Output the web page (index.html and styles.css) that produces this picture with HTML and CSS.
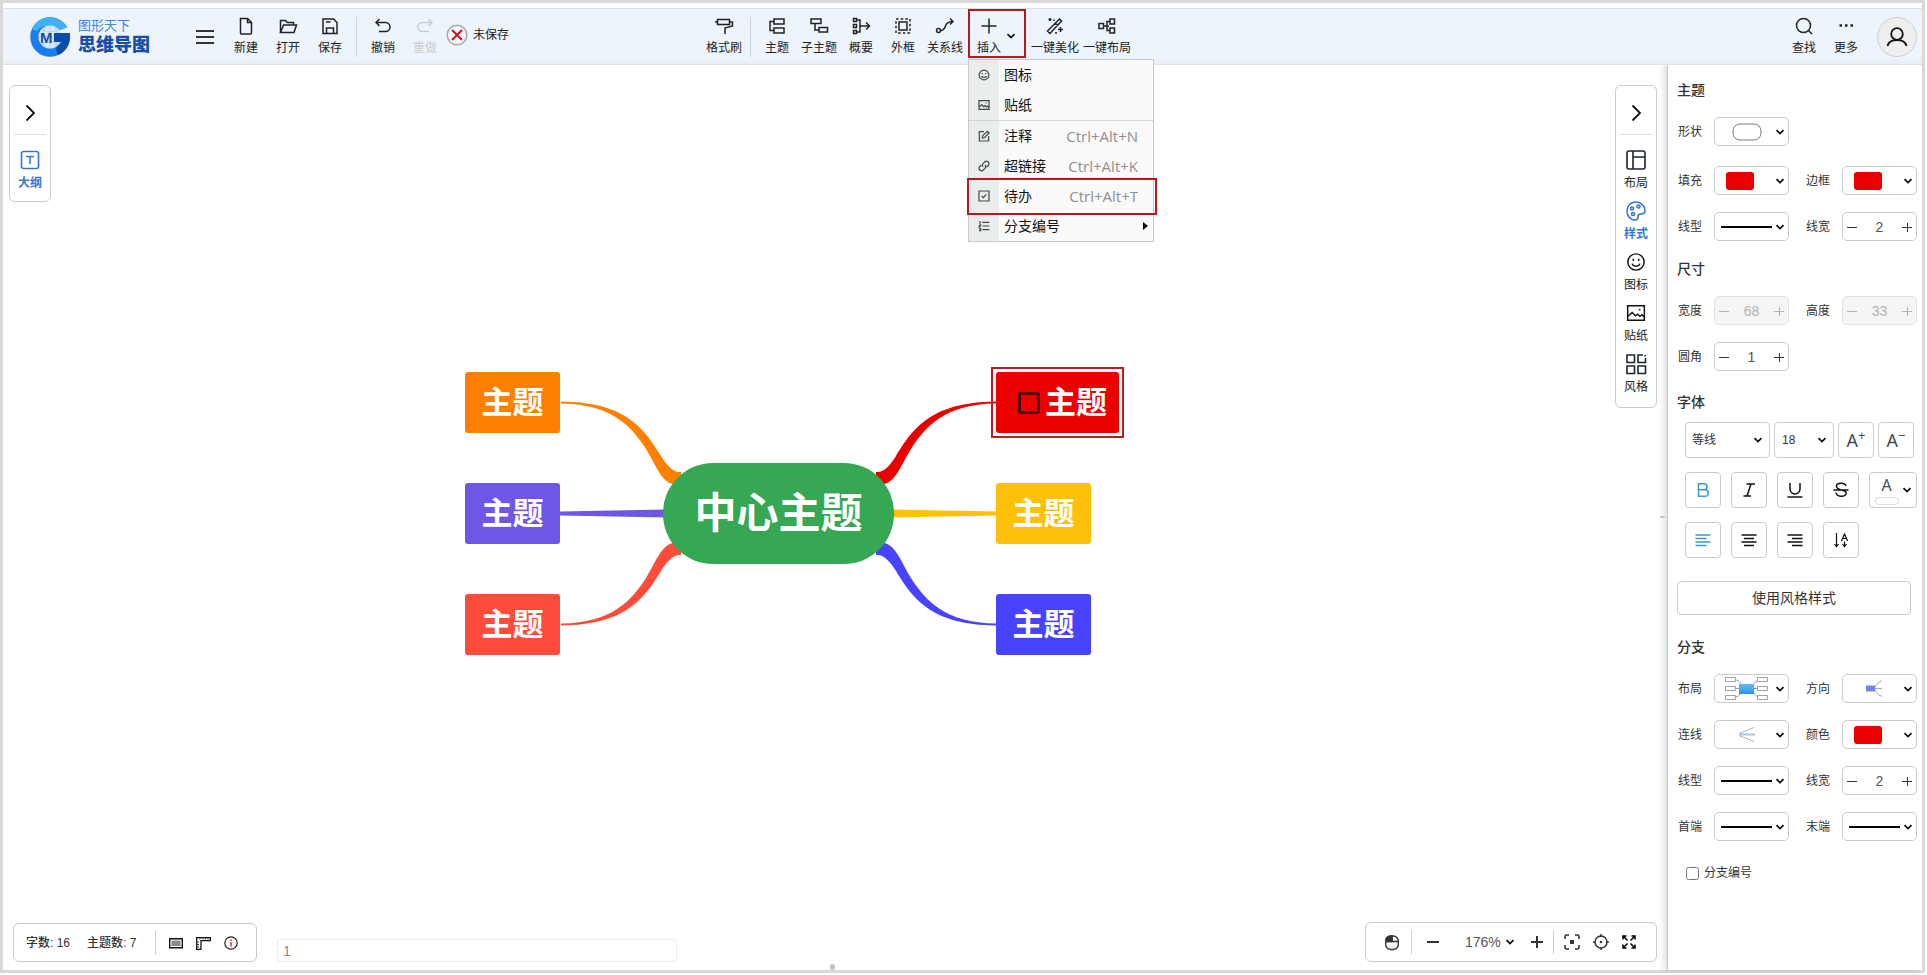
FILE: index.html
```html
<!DOCTYPE html>
<html lang="zh-CN">
<head>
<meta charset="utf-8">
<title>思维导图</title>
<link rel="stylesheet" href="styles.css">
</head>
<body>
<svg class="defs" aria-hidden="true">
  <symbol id="caret" viewBox="0 0 10 10"><path d="M1.5 3.2 5 6.6l3.500-3.400" fill="none" stroke="#111" stroke-width="1.800"/></symbol>
  <symbol id="minus" viewBox="0 0 10 10"><path d="M0 5.500h10" fill="none" stroke="currentColor"/></symbol>
  <symbol id="plus" viewBox="0 0 10 10"><path d="M0 5.500h10M5.500 1v9" fill="none" stroke="currentColor"/></symbol>
  <symbol id="smile" viewBox="0 0 18 18"><circle cx="9" cy="9" r="7.300"/><path d="M5.500 10.500c.8 3 6.200 3 7 0"/><path d="M6.600 6v2M11.400 6v2"/></symbol>
  <symbol id="pic" viewBox="0 0 18 18"><path d="M1.500 2.500h15v13h-15z"/><path d="m2 12 3.500-3.500 3 3 2-1.500 2 2 2-1.500 2 2"/><path d="M11.500 6h1.500"/></symbol>
</svg>
<div class="frame">
  <header class="topbar">
    <div class="group group-left">
      <a class="brand" href="#" aria-label="图形天下 思维导图">
        <svg width="40" height="40" viewBox="0 0 40 40" aria-hidden="true">
          <circle cx="20" cy="20" r="15" fill="none" stroke="#1a7df0" stroke-width="9.500"/>
          <path d="M2 12C9-3 29-3 37 11l-9 3C23 8 12 7 7 14z" fill="#3fb2f4"/>
          <path d="M28 14 37 10.500 41 12v5H28z" fill="#edf4fb"/>
          <circle cx="20" cy="20" r="11.500" fill="#dbe9f8"/>
          <path d="M9 20h21M20 9v22M12 12c4 4 12 4 16 0M12 28c4-4 12-4 16 0M16 9c-5 7-5 15 0 22M24 9c5 7 5 15 0 22" fill="none" stroke="#b3cde9"/>
          <path d="M24 16h16v4c0 9-5 15-12 18-2-4-2-6-1-9 3-1 4-2 5-4h-8z" fill="#0b4bb0"/>
          <text class="logo-m" x="10" y="26">M</text>
        </svg>
        <span class="brand-text"><span class="brand-top">图形天下</span><span class="brand-main">思维导图</span></span>
      </a>
      <button class="menu" aria-label="菜单"><svg width="18" height="18" viewBox="0 0 18 18"><path d="M0 3h18M0 9h18M0 15h18" stroke="#333" stroke-width="2"/></svg></button>
      <button class="tool"><svg class="ic" viewBox="0 0 18 18"><path d="M3.500 1.500h7l4 4v10.500c0 .5-.5 1-1 1h-9c-.6 0-1-.5-1-1z"/><path d="M10.500 1.500v4h4"/></svg><span>新建</span></button>
      <button class="tool"><svg class="ic" viewBox="0 0 18 18"><path d="M1.500 15.500v-12h5l2 2h6v2.500"/><path d="M1.500 15.500 4.500 8h13l-2.500 7.500z"/></svg><span>打开</span></button>
      <button class="tool"><svg class="ic" viewBox="0 0 18 18"><path d="M2 2h10.500L16 5.500V16.500H2z"/><path d="M5.500 16.500V11h7v5.500M5 5h4.500"/></svg><span>保存</span></button>
      <span class="sep"></span>
      <button class="tool"><svg class="ic" viewBox="0 0 18 18"><path d="M5.500 2 2 5.500 5.500 9M2 5.500h9.500a4.500 4.500 0 0 1 0 9H5"/></svg><span>撤销</span></button>
      <button class="tool" disabled><svg class="ic" viewBox="0 0 18 18"><path d="M12.500 2 16 5.500 12.500 9M16 5.500H6.500a4.500 4.500 0 0 0 0 9H13"/></svg><span>重做</span></button>
      <span class="status"><svg width="22" height="22" viewBox="0 0 22 22"><circle cx="11" cy="11" r="9.800" fill="#f5f7f9" stroke="#a9a9a9" stroke-width="1.500"/><path d="m6 6 10 10M16 6 6 16" stroke="#c9181e" stroke-width="2"/></svg><span>未保存</span></span>
    </div>
    <div class="group">
      <button class="tool"><svg class="ic" viewBox="0 0 18 18"><path d="M2.500 2.500h12v5h-12zM0 5h2.500M14.500 5H17.500v4l-7.500 2v6"/></svg><span>格式刷</span></button>
      <span class="sep"></span>
      <button class="tool"><svg class="ic" viewBox="0 0 18 18"><path d="M6 2h10v5H6zM6 11h10v5H6zM6 4.500H2v9h4"/></svg><span>主题</span></button>
      <button class="tool"><svg class="ic" viewBox="0 0 18 18"><path d="M1 2h10v4.500H1zM9 10.500h8.500V15H9zM5 6.500v6.500h4"/></svg><span>子主题</span></button>
      <button class="tool"><svg class="ic" viewBox="0 0 18 18"><path d="M1.500 1.500h3v3h-3zM1.500 7.500h3v3h-3zM1.500 13.500h3v3h-3zM4.500 3H8v12H4.500M8 9h9.500M14 5.500 17.500 9 14 12.500"/></svg><span>概要</span></button>
      <button class="tool"><svg class="ic" viewBox="0 0 18 18"><path d="M5 5h8v8H5z"/><path d="M2 2h14v14H2z" stroke-dasharray="2.500 2.170"/></svg><span>外框</span></button>
      <button class="tool"><svg class="ic" viewBox="0 0 18 18"><circle cx="2.500" cy="13.500" r="2"/><path d="M4.500 13.500c7 0 2-9 12.500-9M14 1.500l3 3-3 3"/></svg><span>关系线</span></button>
      <div class="insert">
        <button class="tool" aria-haspopup="menu" aria-expanded="true"><svg class="ic" viewBox="0 0 18 18"><path d="M9 1.500v15M1.500 9h15"/></svg><span>插入</span></button>
        <svg class="caret insert-caret"><use href="#caret"/></svg>
        <ul class="dropdown" role="menu">
          <li><button role="menuitem"><svg class="mi"><use href="#smile"/></svg><span>图标</span></button></li>
          <li><button role="menuitem"><svg class="mi"><use href="#pic"/></svg><span>贴纸</span></button></li>
          <li class="divided"><button role="menuitem"><svg class="mi" viewBox="0 0 18 18"><path d="M9 2.500H2v14h14V9"/><path d="m7 8.500 7-6.500 2.500 2.500-7 7L6.500 12z"/></svg><span>注释</span><kbd>Ctrl+Alt+N</kbd></button></li>
          <li><button role="menuitem"><svg class="mi" viewBox="0 0 18 18"><path d="M7.500 10.500a3.800 3.800 0 0 1 0-5L10 3a3.700 3.700 0 0 1 5.300 5.300L13 10.500"/><path d="M10.500 7.500a3.800 3.800 0 0 1 0 5L8 15a3.700 3.700 0 0 1-5.300-5.300L5 7.500"/></svg><span>超链接</span><kbd>Ctrl+Alt+K</kbd></button></li>
          <li class="marked"><button role="menuitem"><svg class="mi" viewBox="0 0 18 18"><path d="M1.500 1.500h15v15h-15zM5.500 9l2.500 2.500 4.500-5"/></svg><span>待办</span><kbd>Ctrl+Alt+T</kbd></button></li>
          <li><button role="menuitem"><svg class="mi" viewBox="0 0 18 18"><path d="M6.500 3.500H17M6.500 9H17M6.500 14.500H17M3 1.500v4M1.500 7.500H4L1.500 10.500H4M1.500 13H4v3H1.500"/></svg><span>分支编号</span><svg class="more" viewBox="0 0 5 8"><path d="M0 0v8l5-4z"/></svg></button></li>
        </ul>
      </div>
      <button class="tool wide"><svg class="ic" viewBox="0 0 18 18"><path d="m1.500 14 9.500-9.500L13.500 2l2 2-11.500 12.500zM9.500 6l2.500 2.500M4 1v3M2.500 2.500h3M8 2.500v1.500M14.500 10v5M12 12.500h5M10 15v2"/></svg><span>一键美化</span></button>
      <button class="tool wide"><svg class="ic" viewBox="0 0 18 18"><path d="M1 6.500h4.500v5H1zM5.500 9H11M12 2h4.500v5H12zM12 11h4.500v5H12zM12 4.500H9v9h3"/></svg><span>一键布局</span></button>
    </div>
    <div class="group group-right">
      <button class="tool"><svg class="ic" viewBox="0 0 18 18"><circle cx="8.500" cy="8.500" r="7"/><path d="m13.500 13.500 3.500 3.500"/></svg><span>查找</span></button>
      <button class="tool"><svg class="ic" viewBox="0 0 18 18"><path d="M2.500 8.500h2.500M8 8.500h2.500M13.500 8.500H16" stroke-width="2.500"/></svg><span>更多</span></button>
      <button class="avatar" aria-label="用户"><svg width="22" height="22" viewBox="0 0 22 22"><circle cx="11" cy="8" r="5.800"/><path d="M1.500 20c2-8 17-8 19 0"/></svg></button>
    </div>
  </header>

  <div class="work">
    <main class="canvas">
      <aside class="rail">
        <button class="fold" aria-label="展开"><svg width="18" height="18" viewBox="0 0 18 18"><path d="m5.500 1.500 7.500 7.500-7.500 7.500"/></svg></button>
        <button class="rail-item active"><svg viewBox="0 0 20 20"><rect x="1.500" y="1.500" width="17" height="17" rx="2"/><path d="M6 6.500h8M10 6.500V14"/></svg><span>大纲</span></button>
      </aside>

      <div class="mindmap">
        <svg class="links" viewBox="465 367 660 290" width="660" height="290">
          <defs><path id="arm" d="M876 472h3C884 471 890 466 896 456 912 430 930 402 996 401.500v2C945 404 925 427 911 449 902 463 896 482 884 484h-8z"/></defs>
          <use href="#arm" fill="#eb0000"/>
          <use href="#arm" fill="#ff7f00" transform="translate(1557 0) scale(-1 1)"/>
          <use href="#arm" fill="#4743ff" transform="translate(0 1027) scale(1 -1)"/>
          <use href="#arm" fill="#ff4b3a" transform="translate(1557 1027) scale(-1 -1)"/>
          <path d="M890 509.500 997 511.500v4L890 517.500z" fill="#ffc00a"/>
          <path d="M667 509.500 560 511.500v4L667 517.500z" fill="#6f56e5"/>
        </svg>
        <div class="node root">中心主题</div>
        <div class="node left row1 orange">主题</div>
        <div class="node left row2 purple">主题</div>
        <div class="node left row3 coral">主题</div>
        <div class="node right row1 red"><input type="checkbox" aria-label="待办">主题</div>
        <div class="node right row2 yellow">主题</div>
        <div class="node right row3 blue">主题</div>
      </div>

      <aside class="rail rail-right">
        <button class="fold" aria-label="收起"><svg width="18" height="18" viewBox="0 0 18 18"><path d="m5.500 1.500 7.500 7.500-7.500 7.500"/></svg></button>
        <button class="rail-item"><svg viewBox="0 0 20 20"><rect x="1" y="1" width="18" height="18" rx="2"/><path d="M7 1v18M7 7h12"/></svg><span>布局</span></button>
        <button class="rail-item active"><svg viewBox="0 0 20 20"><path d="M10 1C4 1 1 5.500 1 10s3 9 8.500 9c2.500 0 2.500-1.500 2.500-3.500S13 13 15 13s4-.5 4-3.500C19 5 15 1 10 1z"/><circle cx="6" cy="7.500" r="1.500"/><circle cx="12.500" cy="5.500" r="1.500"/><circle cx="7" cy="13" r="1.500"/></svg><span>样式</span></button>
        <button class="rail-item"><svg class="plain"><use href="#smile"/></svg><span>图标</span></button>
        <button class="rail-item"><svg class="plain"><use href="#pic"/></svg><span>贴纸</span></button>
        <button class="rail-item"><svg viewBox="0 0 20 20"><path d="M1 1h7.500v7.500H1zM1 12h7.500v7.500H1zM12 12h7.500v7.500H12zM17 1h-5v7.500h7.500V4M19 1v1.500"/></svg><span>风格</span></button>
      </aside>

      <footer class="footer">
        <div class="bar counts">
          <span>字数: 16</span><span class="topics">主题数: 7</span><span class="vsep"></span>
          <button aria-label="键盘"><svg width="14" height="14" viewBox="0 0 14 14"><path d="M.7 2.700h12.600v9H.7z" fill="#fff" stroke="#111" stroke-width="1.400"/><path d="M2.500 4.500h9v5.500h-9z" fill="#888"/></svg></button>
          <button aria-label="标尺"><svg width="15" height="14" viewBox="0 0 15 14"><path d="M.7 1.700h13.600v3H5v8.600H.7z" fill="#fff" stroke="#111" stroke-width="1.300"/><path d="M4 2v1.500M7 2v1.500M9.500 2v1.500M12 2v1.500M1 6h2M1 8.500h2M1 11h2" stroke="#333"/></svg></button>
          <button aria-label="信息"><svg width="14" height="14" viewBox="0 0 14 14"><circle cx="7" cy="7" r="6.200" fill="none" stroke="#222" stroke-width="1.200"/><path d="M7 3.500v1.500M7 6v4.500" stroke="#c0392b" stroke-width="1.500"/></svg></button>
        </div>
        <input class="page" type="text" value="1" aria-label="页">
        <div class="bar zoom">
          <button aria-label="鼠标"><svg width="14" height="18" viewBox="0 0 14 18"><rect x=".7" y="3" width="12.600" height="13.500" rx="5"/><path d="M1 8.500h12.500M7 3v5.500"/><path d="M1 8.500V7c0-3 2-4 6-4v5.500z" fill="#333"/></svg></button>
          <span class="vsep"></span>
          <button aria-label="缩小"><svg width="12" height="12" viewBox="0 0 12 12"><path d="M0 6h12" stroke-width="2"/></svg></button>
          <span class="pick zoom-pick"><select aria-label="缩放"><option>176%</option></select><svg class="caret"><use href="#caret"/></svg></span>
          <button aria-label="放大"><svg width="12" height="12" viewBox="0 0 12 12"><path d="M0 6h12M6 0v12" stroke-width="2"/></svg></button>
          <span class="vsep"></span>
          <button aria-label="适应画布"><svg width="16" height="16" viewBox="0 0 16 16"><path d="M5 1H2.500Q1 1 1 2.500V5M11 1h2.500Q15 1 15 2.500V5M5 15H2.500Q1 15 1 13.500V11M11 15h2.500q1.500 0 1.500-1.500V11" stroke-width="1.600"/><path d="M6.700 6.700h2.600v2.600H6.700z" fill="#333"/></svg></button>
          <button aria-label="居中"><svg width="16" height="16" viewBox="0 0 16 16"><circle cx="8" cy="8" r="6"/><path d="M8 0v3M8 13v3M0 8h3M13 8h3"/><circle cx="8" cy="8" r=".6"/></svg></button>
          <button aria-label="全屏"><svg width="14" height="14" viewBox="0 0 14 14"><path d="M1 4.500V1h3.500M9.500 1H13v3.500M1 9.500V13h3.500M13 9.500V13H9.500M1 1l4.500 4.500M13 1 8.500 5.500M1 13l4.500-4.500M13 13 8.500 8.500" stroke="#000" stroke-width="1.500"/></svg></button>
        </div>
      </footer>
      <span class="grip grip-side"></span>
      <span class="grip grip-bottom"></span>
    </main>

    <aside class="panel">
      <h2>主题</h2>
      <div class="fields first">
        <span>形状</span><button class="combo" aria-label="形状"><svg class="art" viewBox="0 0 55 20"><rect x="13" y="2.500" width="28" height="16" rx="7" fill="#fff" stroke="#777"/></svg><svg class="caret"><use href="#caret"/></svg></button>
      </div>
      <div class="fields">
        <span>填充</span><button class="combo" aria-label="填充"><i class="swatch"></i><svg class="caret"><use href="#caret"/></svg></button>
        <span>边框</span><button class="combo" aria-label="边框"><i class="swatch"></i><svg class="caret"><use href="#caret"/></svg></button>
        <span>线型</span><button class="combo" aria-label="线型"><i class="stroke"></i><svg class="caret"><use href="#caret"/></svg></button>
        <label for="lw">线宽</label><div class="step"><button aria-label="减"><svg><use href="#minus"/></svg></button><input id="lw" type="text" value="2"><button aria-label="加"><svg><use href="#plus"/></svg></button></div>
      </div>
      <h2>尺寸</h2>
      <div class="fields">
        <label for="w">宽度</label><div class="step off"><button disabled aria-label="减"><svg><use href="#minus"/></svg></button><input id="w" type="text" value="68" disabled><button disabled aria-label="加"><svg><use href="#plus"/></svg></button></div>
        <label for="h">高度</label><div class="step off"><button disabled aria-label="减"><svg><use href="#minus"/></svg></button><input id="h" type="text" value="33" disabled><button disabled aria-label="加"><svg><use href="#plus"/></svg></button></div>
        <label for="r">圆角</label><div class="step"><button aria-label="减"><svg><use href="#minus"/></svg></button><input id="r" type="text" value="1"><button aria-label="加"><svg><use href="#plus"/></svg></button></div>
      </div>
      <h2 class="font-title">字体</h2>
      <div class="fonts">
        <div class="font-row tight">
          <span class="pick family"><select aria-label="字体"><option>等线</option></select><svg class="caret"><use href="#caret"/></svg></span>
          <span class="pick size"><select aria-label="字号"><option>18</option></select><svg class="caret"><use href="#caret"/></svg></span>
          <button class="sq letter" aria-label="增大">A<sup>+</sup></button>
          <button class="sq letter" aria-label="减小">A<sup>−</sup></button>
        </div>
        <div class="font-row">
          <button class="sq on" aria-label="加粗"><svg viewBox="0 0 16 16"><path d="M3.500 1.700h5.500a3 3 0 0 1 0 6H3.500zM3.500 7.700h6.500a3.300 3.300 0 0 1 0 6.600H3.500z"/></svg></button>
          <button class="sq" aria-label="斜体"><svg viewBox="0 0 16 16"><path d="M5.500 2H14M2.500 14H10M10 2 6 14"/></svg></button>
          <button class="sq" aria-label="下划线"><svg viewBox="0 0 16 16"><path d="M3 1v6a5 5 0 0 0 10 0V1M.5 15h15"/></svg></button>
          <button class="sq" aria-label="删除线"><svg viewBox="0 0 16 16"><path d="M13 4c-1-4-9.500-3.500-9.500 0 0 3 3 3.500 5 4 5 1 5 3 4.500 4-1.500 3.500-9.500 3-10-1.500M.5 8h15"/></svg></button>
          <button class="sq color" aria-label="文字颜色"><span class="ink">A<i></i></span><svg class="caret"><use href="#caret"/></svg></button>
        </div>
        <div class="font-row">
          <button class="sq on" aria-label="左对齐"><svg viewBox="0 0 16 16"><path d="M.5 3h15M.5 6.500h11M.5 10h15M.5 13.500h11"/></svg></button>
          <button class="sq" aria-label="居中"><svg viewBox="0 0 16 16"><path d="M.5 3h15M3 6.500h10M.5 10h15M3 13.500h10"/></svg></button>
          <button class="sq" aria-label="右对齐"><svg viewBox="0 0 16 16"><path d="M.5 3h15M5 6.500h10.500M.5 10h15M5 13.500h10.500"/></svg></button>
          <button class="sq" aria-label="文字方向"><svg viewBox="0 0 16 16"><path d="M3.500 1v13.500M1.500 12l2 2.500 2-2.500M8.500 9 11.500 2l3 7M9.500 6.500h4M11.500 9.500V14M9.500 12l2 2.500 2-2.500" stroke-width="1.200"/></svg></button>
        </div>
      </div>
      <button class="apply">使用风格样式</button>
      <h2>分支</h2>
      <div class="fields">
        <span>布局</span><button class="combo" aria-label="布局"><svg class="art" viewBox="0 0 55 27"><defs><linearGradient id="sky" x2="0" y2="1"><stop stop-color="#62bdf5"/><stop offset="1" stop-color="#2a93e8"/></linearGradient></defs><path d="M15 5c5 0 5 4 7 5M15 22c5 0 5-4 7-5M15 13.500h24M40 5c-5 0-5 4-7 5M40 22c-5 0-5-4-7-5" fill="none" stroke="#999"/><g fill="#fff" stroke="#a0a0a0"><path d="M5.500 2.500h10v4h-10zM5.500 11.500h10v4h-10zM5.500 20.500h10v4h-10zM37.500 2.500h10v4h-10zM37.500 11.500h10v4h-10zM37.500 20.500h10v4h-10z"/></g><rect x="19" y="9" width="15" height="10" fill="url(#sky)"/></svg><svg class="caret"><use href="#caret"/></svg></button>
        <span>方向</span><button class="combo" aria-label="方向"><svg class="art" viewBox="0 0 55 20"><path d="M34 2.500c-6 0-5 7-9 7.500h9M34 17.500c-6 0-5-7-9-7.500" fill="none" stroke="#aaa"/><path d="M18 7h9v6h-9z" fill="#7b80f0"/></svg><svg class="caret"><use href="#caret"/></svg></button>
        <span>连线</span><button class="combo" aria-label="连线"><svg class="art" viewBox="0 0 55 20"><path d="M34 3 19 9M34 17 19 11" fill="none" stroke="#b0b0b0"/><path d="M19 10h16" stroke="#a9c4de" stroke-width="2"/></svg><svg class="caret"><use href="#caret"/></svg></button>
        <span>颜色</span><button class="combo" aria-label="颜色"><i class="swatch"></i><svg class="caret"><use href="#caret"/></svg></button>
        <span>线型</span><button class="combo" aria-label="线型"><i class="stroke"></i><svg class="caret"><use href="#caret"/></svg></button>
        <label for="bw">线宽</label><div class="step"><button aria-label="减"><svg><use href="#minus"/></svg></button><input id="bw" type="text" value="2"><button aria-label="加"><svg><use href="#plus"/></svg></button></div>
        <span>首端</span><button class="combo" aria-label="首端"><i class="stroke"></i><svg class="caret"><use href="#caret"/></svg></button>
        <span>末端</span><button class="combo" aria-label="末端"><i class="stroke"></i><svg class="caret"><use href="#caret"/></svg></button>
      </div>
      <label class="numbering"><input type="checkbox">分支编号</label>
    </aside>
  </div>
</div>
</body>
</html>
```

FILE: styles.css
```css
* { box-sizing: border-box; }
body {
  margin: 0;
  height: 100vh;
  padding: 0 2px 2px 0;
  overflow: hidden;
  background: #fff;
  color: #222;
  font: 12px/16px "Liberation Sans", "Noto Sans CJK SC", sans-serif;
}
button, input, select { font: inherit; color: inherit; margin: 0; padding: 0; border: 0; background: none; }
button { display: flex; align-items: center; justify-content: center; }
svg { flex: none; overflow: visible; }
.defs { position: absolute; width: 0; height: 0; }
.frame { display: flex; flex-direction: column; height: 100%; padding-top: 5px; border: 3px solid #d9d9d9; }
.caret { width: 10px; height: 10px; }

.topbar {
  position: relative;
  z-index: 2;
  display: flex;
  flex: none;
  height: 57px;
  padding: 8px 5px 0 27px;
  border-top: 1px solid #dcdfe2;
  border-bottom: 1px solid #dfe1e3;
  background: linear-gradient(#edf4fb 90%, #e8edf2);
}
.group { display: flex; align-items: flex-start; }
.group-left { width: 673px; }
.group-right { margin-left: auto; }
.brand { display: flex; gap: 8px; width: 162px; margin-right: 4px; text-decoration: none; }
.logo-m { font: bold 15px "Liberation Sans", sans-serif; fill: #1b4fa0; }
.brand-text { display: flex; flex-direction: column; padding-top: 1px; }
.brand-top { color: #3c86dc; font-size: 13px; }
.brand-main { color: #184ea6; font-size: 18px; font-weight: 900; line-height: 22px; }
.menu { width: 18px; height: 40px; margin-right: 11px; }
.tool { flex-direction: column; gap: 5px; width: 42px; white-space: nowrap; }
.tool.wide { width: 52px; }
.tool:disabled { color: #c9cdd1; }
.ic { width: 18px; height: 18px; fill: none; stroke: currentColor; stroke-width: 1.5; }
.sep { width: 1px; height: 40px; margin: 0 5px; background: #ccd5dd; }
.status { display: flex; align-items: center; gap: 5px; height: 36px; }
.avatar { width: 40px; height: 40px; margin-left: 10px; border: 1px solid #cfcfcf; border-radius: 50%; background: #eee; }
.avatar svg { fill: none; stroke: #111; stroke-width: 1.8; }

.insert { position: relative; display: flex; width: 58px; margin: 0 3px 0 2px; }
.insert::before { content: ""; position: absolute; inset: -8px 0 -2px; border: 2px solid #b8191c; pointer-events: none; }
.insert-caret { margin-top: 14px; margin-left: -4px; }
.dropdown {
  position: absolute;
  top: 42px;
  left: 0;
  width: 186px;
  margin: 0;
  padding: 0;
  list-style: none;
  border: 1px solid #c6c9cb;
  background: linear-gradient(90deg, #e9eeed 30px, #fafafa 30px);
  font-size: 14px;
}
.dropdown li { position: relative; }
.dropdown button { justify-content: flex-start; width: 100%; height: 30px; padding: 0 15px 0 9px; color: #111; }
.divided { border-top: 1px solid #cfd3d4; }
.mi { width: 12px; height: 12px; margin-right: 14px; fill: none; stroke: #444; stroke-width: 1.8; }
.dropdown kbd { margin-left: auto; color: #8f8f8f; font: 15px "Open Sans", sans-serif; }
.dropdown .more { width: 5px; height: 8px; margin-left: auto; margin-right: -10px; }
.marked::after { content: ""; position: absolute; inset: -3px -4px -4px -2px; border: 2px solid #b8191c; pointer-events: none; }

.work { display: flex; flex: 1; min-height: 0; }
.canvas { position: relative; display: flex; justify-content: space-between; align-items: flex-start; flex: 1; padding: 20px 10px 0 6px; }
.rail { display: flex; flex-direction: column; align-items: center; width: 42px; padding: 0 4px 10px; border: 1px solid #c9cbcc; border-radius: 6px; background: #fff; }
.fold { width: 32px; height: 49px; padding-top: 6px; border-bottom: 1px solid #d5dde0; }
.fold svg { fill: none; stroke: #111; stroke-width: 1.8; }
.rail-item { flex-direction: column; gap: 5px; padding-top: 10px; }
.fold + .rail-item { padding-top: 15px; }
.rail-item svg { width: 20px; height: 20px; fill: none; stroke: #1d2530; stroke-width: 1.6; }
.rail-item .plain { stroke: #111; stroke-width: 1.3; }
.rail-item.active { color: #3577d4; font-weight: bold; }
.rail-item.active svg { stroke: #3577d4; }
.rail-right { padding-bottom: 12px; }

.mindmap { position: absolute; left: 462px; top: 302px; width: 660px; height: 290px; }
.links { display: block; }
.node {
  position: absolute;
  display: flex;
  align-items: center;
  justify-content: center;
  width: 95px;
  height: 61px;
  border-radius: 3px;
  color: #fff;
  font-size: 31px;
  font-weight: bold;
  line-height: 40px;
  white-space: nowrap;
}
.root { left: 198px; top: 96px; width: 231px; height: 101px; border-radius: 50px; background: #36a853; font-size: 42px; line-height: 50px; }
.left { left: 0; }
.right { left: 531px; }
.row1 { top: 5px; }
.row2 { top: 116px; }
.row3 { top: 227px; }
.orange { background: #ff7f00; }
.purple { background: #6f56e5; }
.coral { background: #ff4b3a; }
.red { justify-content: flex-end; gap: 5px; width: 123px; padding-right: 12px; background: #eb0000; }
.red::after { content: ""; position: absolute; inset: -5px; border: 2px solid #c11b1f; }
.red input { appearance: none; width: 22px; height: 22px; border: 3px solid #4d0606; border-radius: 3px; }
.yellow { background: #ffc00a; }
.blue { background: #4743ff; }

.footer { position: absolute; right: 10px; bottom: 8px; left: 10px; display: flex; align-items: flex-end; }
.bar { display: flex; align-items: center; height: 39px; border: 1px solid #c9cbcc; border-radius: 6px; background: #fff; }
.counts { gap: 13px; width: 244px; padding-left: 12px; color: #333; font-weight: 500; }
.topics { margin-left: 4px; }
.vsep { width: 1px; height: 24px; background: #c8d3d6; }
.counts .vsep { margin-left: 6px; }
.page { width: 400px; height: 23px; margin-left: 20px; padding-left: 5px; border: 1px solid #ebebeb; border-radius: 3px; color: #8a8a8a; font-size: 14px; }
.zoom { width: 292px; height: 40px; margin-left: auto; padding-left: 19px; }
.zoom button svg { fill: none; stroke: #333; stroke-width: 1.4; }
.zoom .vsep { margin: 0 11px 0 12px; }
.zoom .vsep + button { margin-left: 4px; }
.zoom-pick { width: 82px; margin-right: 10px; padding-left: 26px; color: #555; font-size: 14px; }
.zoom .zoom-pick ~ .vsep { margin: 0 6px 0 10px; }
.zoom .zoom-pick ~ .vsep ~ button { margin-right: 13px; }
.grip { position: absolute; border-radius: 2px; background: #c4c4c4; }
.grip-side { right: 2px; top: 451px; width: 5px; height: 2px; }
.grip-bottom { left: 827px; bottom: 0; width: 5px; height: 6px; }

.pick { display: grid; grid-template-columns: 1fr 16px; align-items: center; }
.pick select { grid-area: 1 / 1 / 2 / 3; appearance: none; height: 100%; }
.pick .caret { grid-area: 1 / 2; pointer-events: none; }

.panel { flex: none; width: 255px; padding: 15px 4px 0 10px; border-left: 1px solid #c9c5c5; background: #fff; box-shadow: -3px 0 6px #00000022; color: #333; }
h2 { margin: 0 0 17px -1px; font-size: 14px; font-weight: 500; line-height: 20px; }
.fields { display: grid; grid-template-columns: 36px 75px 53px 75px; row-gap: 17px; align-items: center; margin-bottom: 18px; }
.first { margin-bottom: 20px; }
.fields > span, .fields > label { justify-self: end; width: 36px; }
.combo, .step { height: 29px; border: 1px solid #c9cbcc; border-radius: 5px; background: #fff; }
.combo { justify-content: flex-start; padding-left: 5px; }
.combo .caret { margin-left: auto; margin-right: 3px; }
.art { width: 55px; height: 27px; }
.combo .art { margin-right: -5px; }
.swatch { width: 28px; height: 18px; margin-left: 6px; border-radius: 3px; background: #eb0000; }
.stroke { width: 51px; height: 2px; margin-left: 1px; background: #000; }
.step { display: flex; justify-content: space-between; padding: 0 2px; font-size: 14px; color: #555; }
.step button { width: 14px; color: #333; }
.step svg { width: 10px; height: 10px; }
.step input { width: 40px; text-align: center; }
.off { border-color: #e2e2e2; background: #f5f5f5; }
.off input, .off button { color: #b3b3b3; }

.font-title { margin-top: 21px; margin-bottom: 10px; }
.fonts { display: flex; flex-direction: column; gap: 14px; padding-left: 7px; }
.font-row { display: flex; gap: 10px; }
.tight { gap: 4px; }
.family, .size, .sq { height: 36px; border: 1px solid #c9cbcc; border-radius: 4px; }
.family { width: 85px; padding-left: 6px; }
.size { width: 60px; padding-left: 7px; }
.sq { width: 36px; }
.sq svg:not(.caret) { width: 16px; height: 16px; fill: none; stroke: #111; stroke-width: 1.5; }
.sq.on svg { stroke: #3f97cc; }
.letter { color: #444c55; font: 18px/20px "Noto Sans", sans-serif; }
.letter sup { font-size: 13px; line-height: 10px; margin-top: -10px; }
.sq.color { width: 48px; gap: 3px; }
.ink { display: flex; flex-direction: column; align-items: center; gap: 3px; color: #444c55; font: 16px/18px "Noto Sans", sans-serif; }
.ink i { width: 24px; height: 8px; border: 1px solid #ddd; border-radius: 4px; }
.apply { width: 234px; height: 34px; margin: 23px 0 22px -1px; border: 1px solid #c9cbcc; border-radius: 4px; font-size: 14px; }
.numbering { display: flex; align-items: center; gap: 5px; margin-top: 22px; padding-left: 8px; line-height: 20px; }
.numbering input { width: 13px; height: 13px; }
```
